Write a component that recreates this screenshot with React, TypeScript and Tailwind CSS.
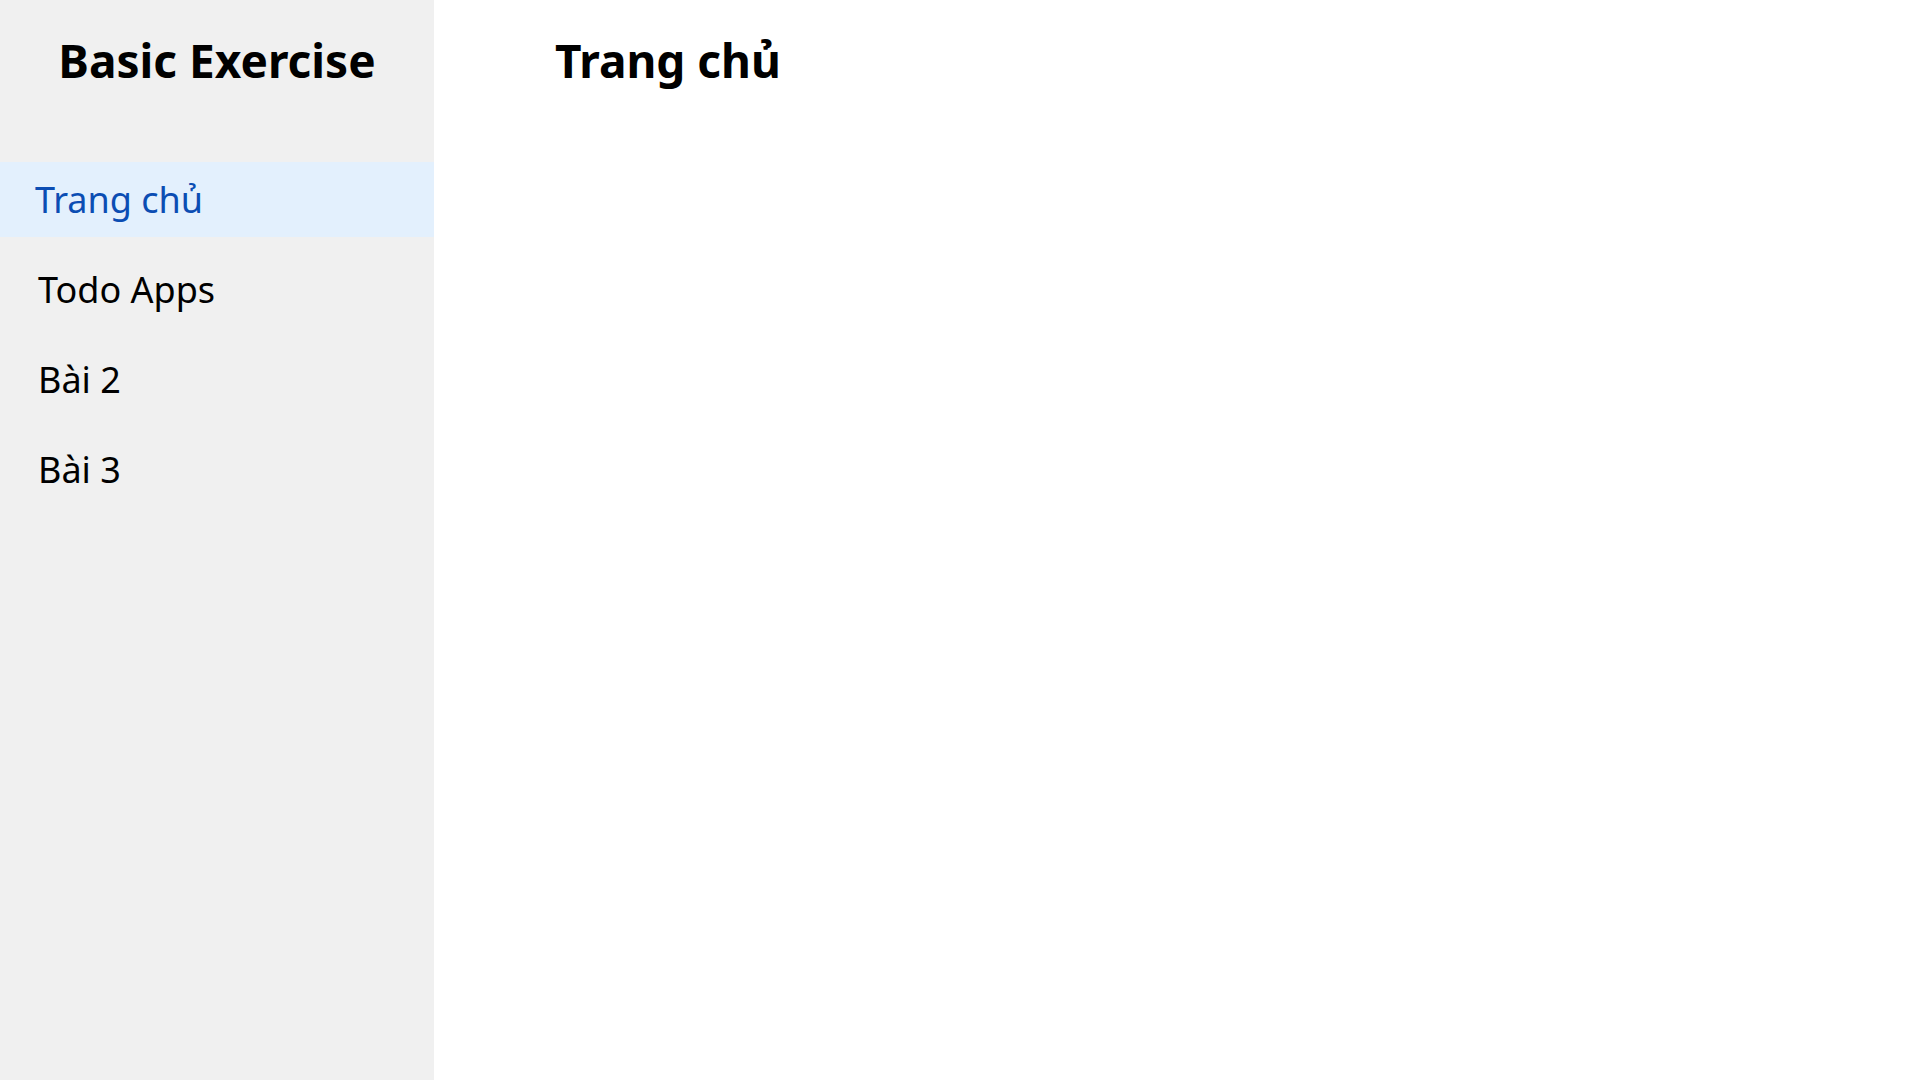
import React, { useState } from "react";

const menuItems = ["Trang chủ", "Todo Apps", "Bài 2", "Bài 3"];

const App: React.FC = () => {
  const [active, setActive] = useState(0);

  return (
    <div className="flex min-h-screen bg-white" style={{ fontFamily: "'Noto Sans', 'Open Sans', sans-serif" }}>
      <aside className="w-[434px] shrink-0 bg-[#f0f0f0]">
        <h1 className="pt-[26px] text-center text-[46px] font-bold text-black">Basic Exercise</h1>
        <nav className="mt-[67px] flex flex-col gap-[15px]">
          {menuItems.map((item, i) => (
            <button
              key={item}
              onClick={() => setActive(i)}
              className={
                i === active
                  ? "flex h-[75px] items-center bg-[#e3f0fd] pl-[35px] text-left text-[36px] text-[#0b4db3]"
                  : "flex h-[75px] items-center pl-[38px] text-left text-[36px] text-black"
              }
            >
              {item}
            </button>
          ))}
        </nav>
      </aside>
      <main className="flex-1 pl-[121px] pt-[26px]">
        <h2 className="text-[46px] font-bold text-black">{menuItems[active]}</h2>
      </main>
    </div>
  );
};

export default App;
